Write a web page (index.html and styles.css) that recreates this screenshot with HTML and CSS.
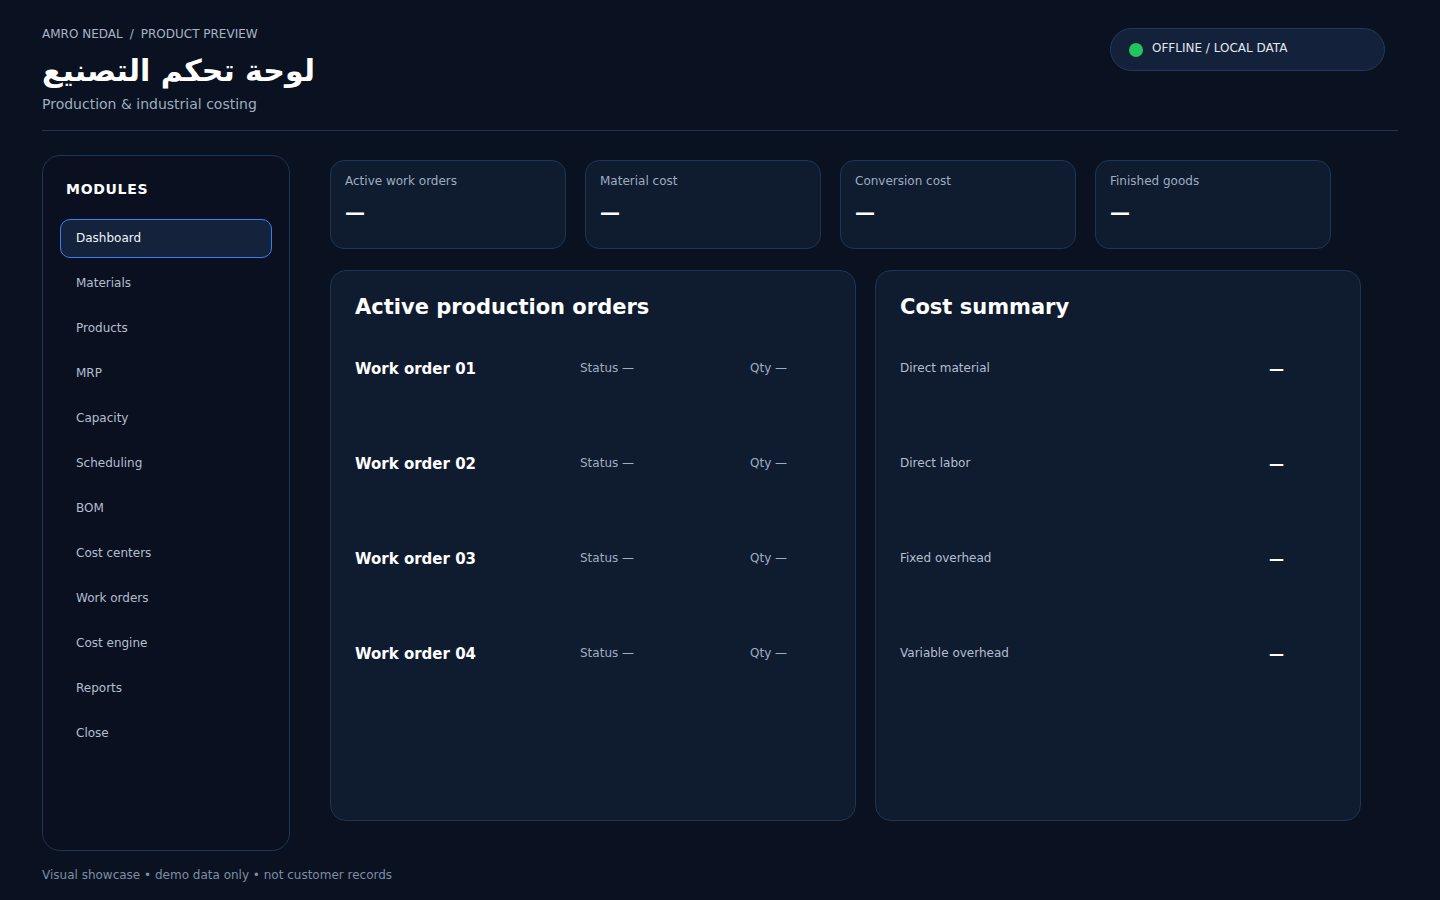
FILE: index.html
```html
<!DOCTYPE html>
<html lang="en">
<head>
<meta charset="utf-8">
<title>Manufacturing dashboard</title>
<link rel="stylesheet" href="styles.css">
</head>
<body>
<div class="page">
  <header class="header">
    <div class="head-left">
      <div class="crumbs">AMRO NEDAL<span class="sep">/</span>PRODUCT PREVIEW</div>
      <h1 class="title" dir="rtl">لوحة تحكم التصنيع</h1>
      <div class="subtitle">Production &amp; industrial costing</div>
    </div>
    <div class="badge"><span class="dot"></span><span class="badge-text">OFFLINE / LOCAL DATA</span></div>
  </header>

  <div class="layout">
    <aside class="sidebar">
      <div class="side-title">MODULES</div>
      <nav class="nav">
        <div class="nav-item active">Dashboard</div>
        <div class="nav-item">Materials</div>
        <div class="nav-item">Products</div>
        <div class="nav-item">MRP</div>
        <div class="nav-item">Capacity</div>
        <div class="nav-item">Scheduling</div>
        <div class="nav-item">BOM</div>
        <div class="nav-item">Cost centers</div>
        <div class="nav-item">Work orders</div>
        <div class="nav-item">Cost engine</div>
        <div class="nav-item">Reports</div>
        <div class="nav-item">Close</div>
      </nav>
    </aside>

    <main class="main">
      <section class="stats">
        <div class="stat"><div class="stat-label">Active work orders</div><div class="stat-value">—</div></div>
        <div class="stat"><div class="stat-label">Material cost</div><div class="stat-value">—</div></div>
        <div class="stat"><div class="stat-label">Conversion cost</div><div class="stat-value">—</div></div>
        <div class="stat"><div class="stat-label">Finished goods</div><div class="stat-value">—</div></div>
      </section>

      <section class="panels">
        <div class="panel">
          <h2 class="panel-title">Active production orders</h2>
          <div class="order-row"><div class="order-name">Work order 01</div><div class="order-meta">Status —</div><div class="order-meta">Qty —</div></div>
          <div class="order-row"><div class="order-name">Work order 02</div><div class="order-meta">Status —</div><div class="order-meta">Qty —</div></div>
          <div class="order-row"><div class="order-name">Work order 03</div><div class="order-meta">Status —</div><div class="order-meta">Qty —</div></div>
          <div class="order-row"><div class="order-name">Work order 04</div><div class="order-meta">Status —</div><div class="order-meta">Qty —</div></div>
        </div>
        <div class="panel">
          <h2 class="panel-title">Cost summary</h2>
          <div class="cost-row"><div class="cost-label">Direct material</div><div class="cost-value">—</div></div>
          <div class="cost-row"><div class="cost-label">Direct labor</div><div class="cost-value">—</div></div>
          <div class="cost-row"><div class="cost-label">Fixed overhead</div><div class="cost-value">—</div></div>
          <div class="cost-row"><div class="cost-label">Variable overhead</div><div class="cost-value">—</div></div>
        </div>
      </section>
    </main>
  </div>

  <footer class="footer">Visual showcase • demo data only • not customer records</footer>
</div>
</body>
</html>
```

FILE: styles.css
```css
* { box-sizing: border-box; }
html, body { margin: 0; padding: 0; }
body {
  background: #0a1120;
  color: #e6edf6;
  font-family: "DejaVu Sans", sans-serif;
  width: 1440px;
  height: 900px;
  overflow: hidden;
}
.page {
  padding: 27px 42px 0 42px;
}
.header {
  display: flex;
  justify-content: space-between;
  align-items: flex-start;
  border-bottom: 1px solid #1e3655;
  padding-bottom: 17px;
}
.crumbs {
  font-size: 12px;
  line-height: 15px;
  color: #a8b5c7;
}
.sep {
  margin: 0 7px;
}
.title {
  margin: 9px 0 0 0;
  font-size: 30px;
  line-height: 40px;
  font-weight: 700;
  color: #ffffff;
  text-align: left;
}
.subtitle {
  margin-top: 4px;
  font-size: 14px;
  line-height: 18px;
  color: #9eadc1;
}
.badge {
  margin-top: 1px;
  margin-right: 13px;
  width: 275px;
  height: 43px;
  border-radius: 22px;
  background: #13223a;
  border: 1px solid #213a5c;
  display: flex;
  align-items: center;
  padding-left: 18px;
  gap: 9px;
  font-size: 12px;
  color: #e2e8f0;
}
.badge-text { position: relative; top: -2px; }
.dot {
  width: 14px;
  height: 14px;
  border-radius: 50%;
  background: #22c55e;
  flex: none;
}
.layout {
  display: flex;
  gap: 40px;
  margin-top: 24px;
}
.sidebar {
  width: 248px;
  height: 696px;
  flex: none;
  background: #0a1020;
  border: 1px solid #1e3655;
  border-radius: 18px;
  padding: 24px 17px;
}
.side-title {
  font-size: 14px;
  font-weight: 700;
  letter-spacing: 0.7px;
  color: #ffffff;
  padding-left: 6px;
  line-height: 18px;
}
.nav {
  margin-top: 21px;
  display: flex;
  flex-direction: column;
  gap: 6px;
}
.nav-item {
  height: 39px;
  line-height: 37px;
  padding: 0 15px;
  font-size: 12px;
  color: #b3bfcf;
  border: 1px solid transparent;
  border-radius: 10px;
}
.nav-item.active {
  background: #14233b;
  border-color: #3b7ef0;
  color: #f1f5f9;
}
.main {
  padding-top: 5px;
}
.stats {
  display: grid;
  grid-template-columns: repeat(4, 236px);
  gap: 19px;
}
.stat {
  height: 89px;
  background: #0f1b2f;
  border: 1px solid #1e3655;
  border-radius: 14px;
  padding: 13px 14px;
}
.stat-label {
  font-size: 12px;
  line-height: 15px;
  color: #9eadc1;
}
.stat-value {
  margin-top: 11px;
  font-size: 20px;
  line-height: 24px;
  font-weight: 700;
  color: #ffffff;
}
.panels {
  display: grid;
  grid-template-columns: 526px 486px;
  gap: 19px;
  margin-top: 21px;
}
.panel {
  height: 551px;
  background: #0f1b2f;
  border: 1px solid #1e3655;
  border-radius: 16px;
  padding: 23px 24px;
}
.panel-title {
  margin: 0;
  font-size: 21px;
  line-height: 27px;
  font-weight: 700;
  color: #ffffff;
}
.order-row {
  display: grid;
  grid-template-columns: 225px 170px 1fr;
  align-items: center;
  height: 95px;
}
.order-name {
  font-size: 15px;
  font-weight: 700;
  color: #ffffff;
}
.order-meta {
  font-size: 12px;
  color: #9eadc1;
  position: relative;
  top: -1px;
}
.cost-row {
  display: flex;
  justify-content: space-between;
  align-items: center;
  height: 95px;
  padding-right: 52px;
}
.cost-label {
  font-size: 12px;
  color: #b3bfcf;
  position: relative;
  top: -1px;
}
.cost-value {
  font-size: 15px;
  font-weight: 700;
  color: #ffffff;
}
.footer {
  margin-top: 17px;
  font-size: 12px;
  line-height: 15px;
  color: #7e8da3;
}
```
